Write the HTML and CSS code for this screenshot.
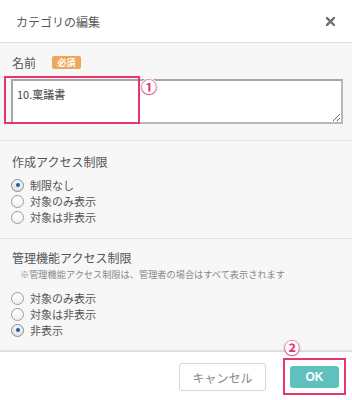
FILE: index.html
```html
<!DOCTYPE html>
<html lang="ja">
<head>
    <meta charset="UTF-8">
    <meta name="viewport" content="width=device-width, initial-scale=1.0">
    <title>カテゴリの編集</title>
    <link rel="stylesheet" href="styles.css">
</head>
<body>
    <div class="modal">
        <div class="modal-header">
            <h2 class="modal-title">カテゴリの編集</h2>
            <button class="close-btn" type="button">
                <svg width="9" height="9" viewBox="0 0 9 9">
                    <path d="M1 1 L8 8 M8 1 L1 8" stroke="#6f6f6f" stroke-width="2.4" stroke-linecap="square"/>
                </svg>
            </button>
        </div>

        <div class="modal-body">
            <!-- Name -->
            <div class="section section-name">
                <div class="field-label">
                    <span>名前</span>
                    <span class="required-badge">必須</span>
                </div>
                <div class="textarea-wrap">
                    <textarea class="name-input">10.稟議書</textarea>
                    <div class="mark-box mark-name"></div>
                    <span class="mark-num num-1">①</span>
                </div>
            </div>

            <!-- Create access -->
            <div class="section section-create">
                <h3 class="section-title">作成アクセス制限</h3>
                <div class="radio-list">
                    <label class="radio-item"><span class="radio checked"></span>制限なし</label>
                    <label class="radio-item"><span class="radio"></span>対象のみ表示</label>
                    <label class="radio-item"><span class="radio"></span>対象は非表示</label>
                </div>
            </div>

            <!-- Admin access -->
            <div class="section section-admin">
                <h3 class="section-title">管理機能アクセス制限</h3>
                <p class="section-note">※管理機能アクセス制限は、管理者の場合はすべて表示されます</p>
                <div class="radio-list">
                    <label class="radio-item"><span class="radio"></span>対象のみ表示</label>
                    <label class="radio-item"><span class="radio"></span>対象は非表示</label>
                    <label class="radio-item"><span class="radio checked"></span>非表示</label>
                </div>
            </div>
        </div>

        <div class="modal-footer">
            <button class="btn btn-cancel" type="button">キャンセル</button>
            <div class="ok-wrap">
                <button class="btn btn-ok" type="button">OK</button>
                <div class="mark-box mark-ok"></div>
                <span class="mark-num num-2">②</span>
            </div>
        </div>
    </div>
</body>
</html>
```

FILE: styles.css
```css
body {
    margin: 0;
    font-family: "Noto Sans CJK JP", "Noto Sans", sans-serif;
    color: #555;
    background: #fff;
}

.modal {
    width: 352px;
    height: 400px;
    display: flex;
    flex-direction: column;
    overflow: hidden;
}

/* Header */
.modal-header {
    height: 43px;
    border-bottom: 1px solid #ddd;
    display: flex;
    align-items: center;
    justify-content: space-between;
    padding: 0 17px 0 16px;
    background: #fff;
}

.modal-title {
    margin: 0;
    font-size: 12px;
    font-weight: normal;
    color: #5a5a5a;
}

.close-btn {
    border: none;
    background: none;
    padding: 0;
    width: 9px;
    height: 9px;
    display: flex;
}

/* Body */
.modal-body {
    background: #f7f7f7;
    flex: 1;
}

.section {
    border-bottom: 1px solid #e2e2e2;
}

.section-name {
    padding: 10px 9px 16px 11px;
}

.field-label {
    display: flex;
    align-items: center;
    height: 18px;
    font-size: 12px;
    padding-left: 1px;
}

.required-badge {
    margin-left: 16px;
    width: 29px;
    height: 13px;
    border-radius: 2px;
    background: #eea85e;
    color: #fff;
    font-size: 9px;
    font-weight: bold;
    line-height: 13px;
    text-align: center;
}

.textarea-wrap {
    position: relative;
    margin-top: 8px;
}

.name-input {
    display: block;
    box-sizing: border-box;
    width: 332px;
    height: 45px;
    margin: 0;
    padding: 6px 4px;
    border: 2px solid #b8b8b8;
    border-top-color: #a6a6a6;
    border-left-color: #a6a6a6;
    background: #fff;
    font-family: inherit;
    font-size: 11px;
    line-height: 14px;
    color: #444;
    resize: vertical;
    outline: none;
}

/* Annotation marks */
.mark-box {
    position: absolute;
    border: 2px solid #e8336b;
    box-sizing: border-box;
}

.mark-name {
    left: -7px;
    top: -3px;
    width: 136px;
    height: 48px;
}

.mark-num {
    position: absolute;
    width: 16px;
    height: 16px;
    border-radius: 50%;
    background: #fff;
    color: #e8336b;
    font-size: 16px;
    font-weight: bold;
    line-height: 16px;
    text-align: center;
    box-shadow: 0 1px 2px rgba(0,0,0,0.3);
}

.num-1 {
    left: 130px;
    top: -1px;
}

/* Radio sections */
.section-create {
    padding: 12px 12px 13px;
}

.section-admin {
    padding: 10px 12px 12px;
}

.section-title {
    margin: 0;
    font-size: 12px;
    font-weight: normal;
    line-height: 18px;
    color: #555;
}

.section-note {
    margin: 0;
    padding-left: 8px;
    font-size: 9.2px;
    line-height: 14px;
    color: #888;
}

.section-create .radio-list {
    margin-top: 6px;
}

.section-admin .radio-list {
    margin-top: 9px;
}

.radio-item {
    display: flex;
    align-items: center;
    height: 16px;
    font-size: 11px;
    color: #555;
}

.radio {
    box-sizing: border-box;
    width: 13px;
    height: 13px;
    margin: 0 6px 0 -1px;
    border: 1px solid #9a9a9a;
    border-radius: 50%;
    background: linear-gradient(#fff, #f0f0f0);
    position: relative;
}

.radio.checked {
    border-color: #8a8a8a;
    background: linear-gradient(#f4f4f4, #e4e4e4);
}

.radio.checked::after {
    content: "";
    position: absolute;
    left: 3.5px;
    top: 3.5px;
    width: 4px;
    height: 4px;
    border-radius: 50%;
    background: #1d5fae;
}

/* Footer */
.modal-footer {
    height: 47px;
    border-top: 1px solid #ddd;
    background: #fff;
    display: flex;
    justify-content: flex-end;
    align-items: center;
    gap: 24px;
    padding: 2px 13px 0 0;
}

.btn {
    font-family: inherit;
    border-radius: 3px;
    cursor: pointer;
}

.btn-cancel {
    width: 87px;
    height: 28px;
    border: 1px solid #d6d6d6;
    background: #fff;
    color: #888;
    font-size: 12px;
}

.ok-wrap {
    position: relative;
    display: flex;
}

.btn-ok {
    width: 49px;
    height: 22px;
    border: none;
    background: #5fc0bd;
    color: #fff;
    font-size: 12px;
    font-weight: bold;
    font-family: "Liberation Sans", Arial, sans-serif;
}

.mark-ok {
    left: -7px;
    top: -8px;
    width: 63px;
    height: 37px;
}

.num-2 {
    left: -6px;
    top: -27px;
}
```
